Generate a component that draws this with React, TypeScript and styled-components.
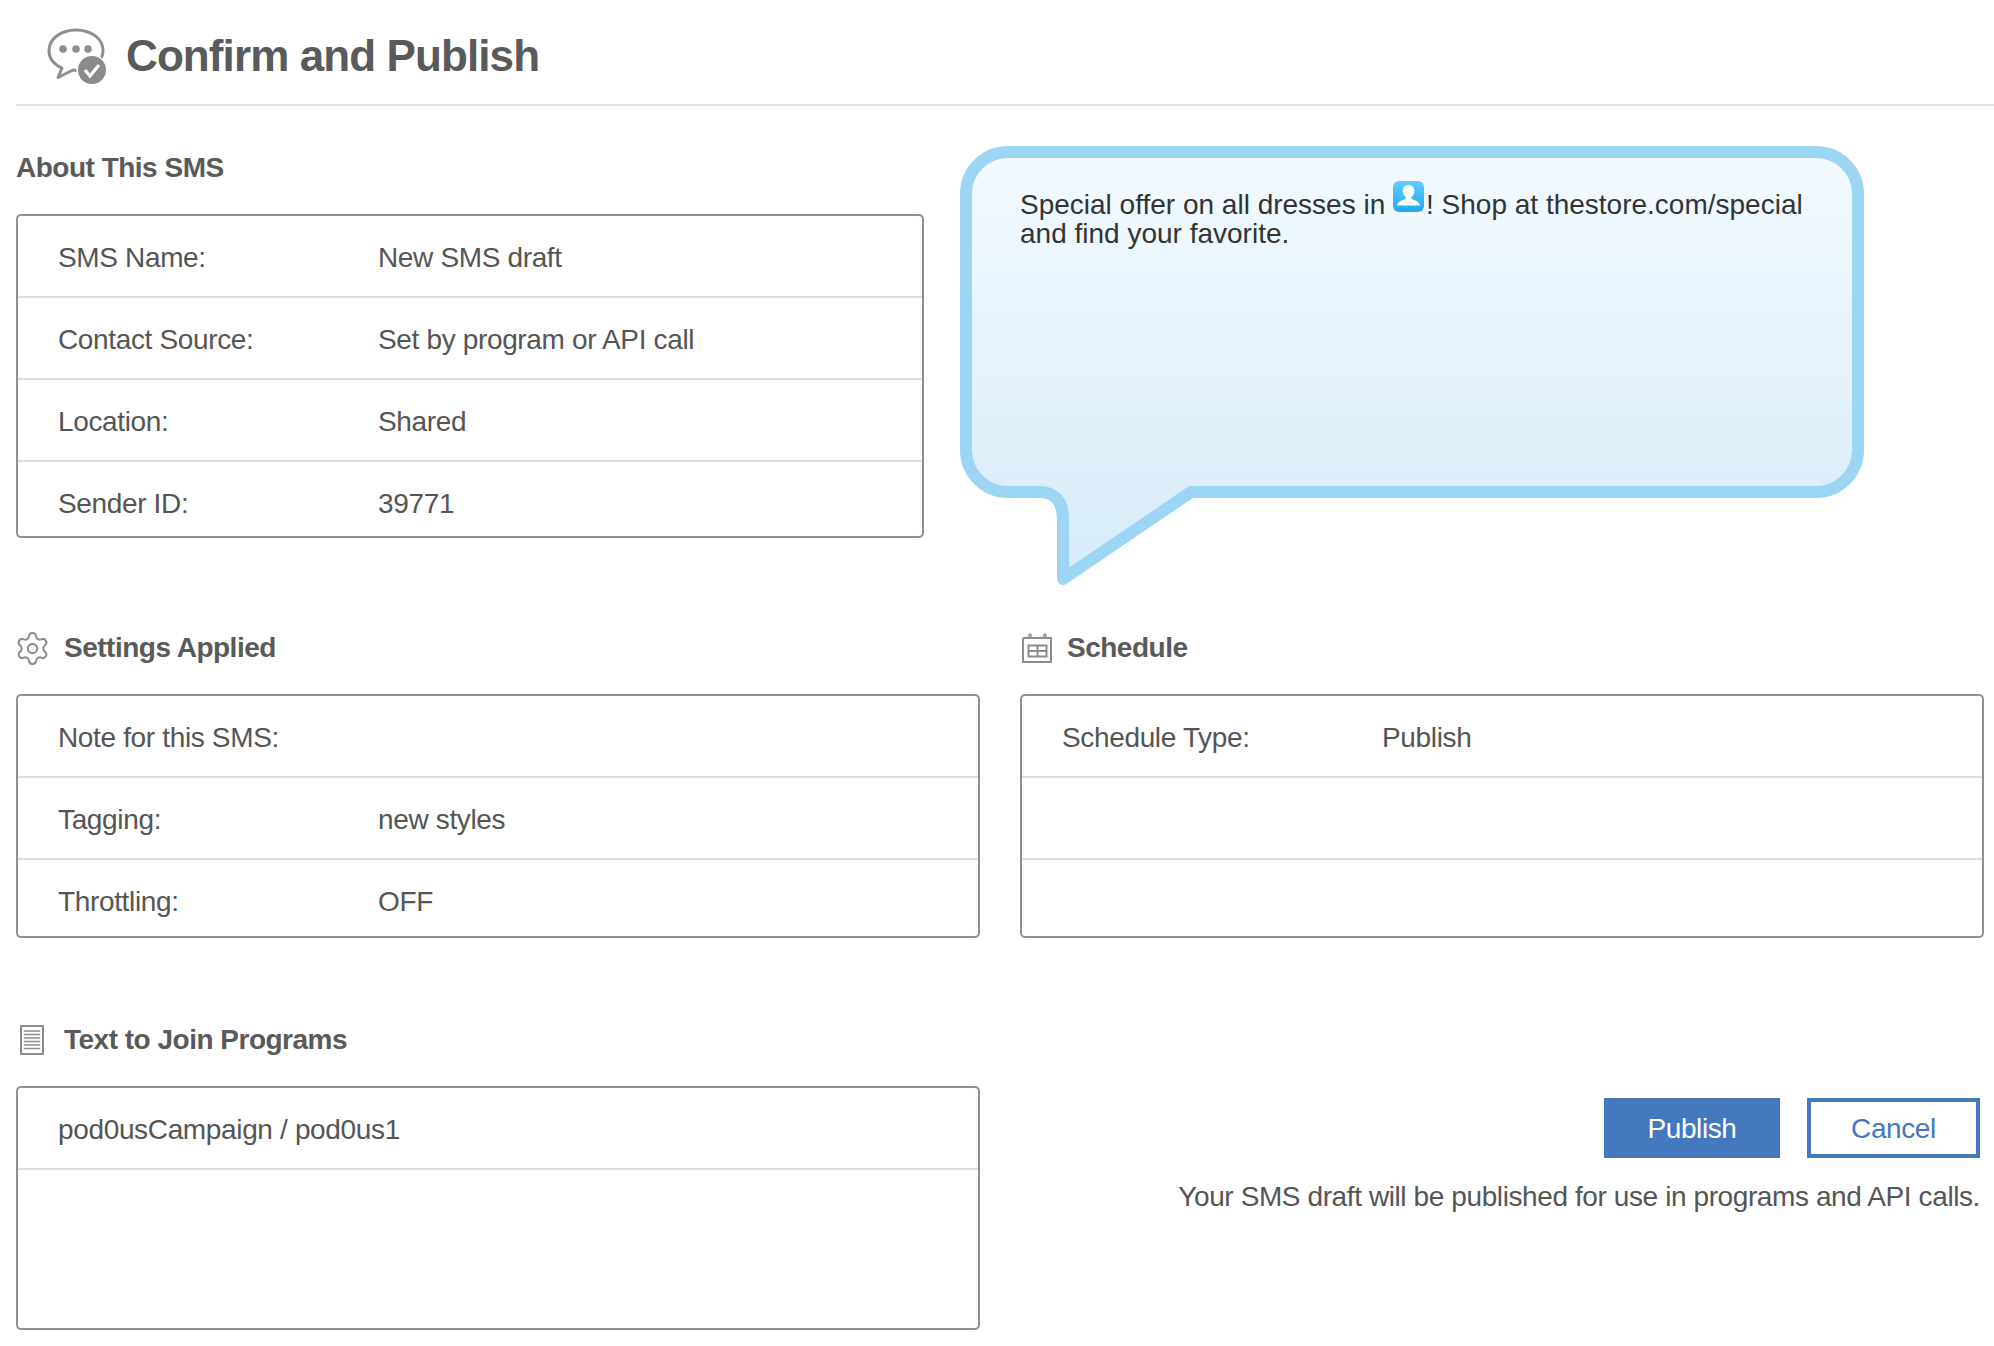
import React, { FC, ReactNode } from 'react'
import styled, { createGlobalStyle } from 'styled-components'
import { Settings } from 'lucide-react'

const GlobalStyle = createGlobalStyle`
  html, body {
    margin: 0;
    padding: 0;
    background: #fff;
  }
  body {
    font-family: "Liberation Sans", Arial, sans-serif;
    color: #555;
  }
  * {
    box-sizing: border-box;
  }
`

const Page = styled.div`
  width: 1994px;
  height: 1346px;
  overflow: hidden;
  padding: 0 10px 0 16px;
`

const Header = styled.header`
  height: 106px;
  margin-right: -10px;
  padding: 7px 0 0 30px;
  display: flex;
  align-items: center;
  gap: 20px;
  border-bottom: 2px solid #e1e1e1;
`

const Title = styled.h1`
  margin: 0;
  font-size: 44px;
  line-height: 50px;
  font-weight: 700;
  letter-spacing: -0.9px;
  color: #5a5a5a;
`

const TopRow = styled.div`
  display: flex;
  align-items: flex-start;
  gap: 36px;
  margin-top: 40px;
`

const TwoColumns = styled.div<{ $top: number }>`
  display: grid;
  grid-template-columns: 964px 964px;
  column-gap: 40px;
  margin-top: ${({ $top }) => $top}px;
`

const Section = styled.section<{ $width?: number; $top?: number }>`
  width: ${({ $width }) => ($width ? `${$width}px` : 'auto')};
  margin-top: ${({ $top }) => $top ?? 0}px;
`

const Heading = styled.h2<{ $gap?: number }>`
  margin: 0 0 25px;
  height: 42px;
  display: flex;
  align-items: center;
  gap: ${({ $gap }) => $gap ?? 16}px;
  font-size: 28px;
  font-weight: 700;
  letter-spacing: -0.5px;
  color: #5a5a5a;
`

const HeadingIcon = styled.span<{ $left?: number }>`
  display: flex;
  margin-left: ${({ $left }) => $left ?? 0}px;
  color: #8d8d8d;
`

const Card = styled.div<{ $height: number }>`
  height: ${({ $height }) => $height}px;
  display: flex;
  flex-direction: column;
  border: 2px solid #8f8f8f;
  border-radius: 5px;
`

const Row = styled.div`
  flex: none;
  height: 82px;
  padding: 24px 0 0 40px;
  display: flex;
  font-size: 28px;
  line-height: 36px;
  letter-spacing: -0.35px;
  white-space: nowrap;
  color: #555;
  border-bottom: 2px solid #dedede;

  &:last-child {
    flex: 1;
    border-bottom: none;
  }
`

const Label = styled.div<{ $wide?: boolean }>`
  width: ${({ $wide }) => ($wide ? 'auto' : '320px')};
`

const Value = styled.div``

const Bubble = styled.div`
  position: relative;
  width: 906px;
  height: 440px;
`

const BubbleShape = styled.svg`
  position: absolute;
  top: 0;
  left: 0;
`

const BubbleText = styled.p`
  position: relative;
  margin: 0;
  padding: 44px 40px 0 60px;
  font-size: 28px;
  line-height: 29px;
  letter-spacing: 0;
  color: #333;
`

const ContactIcon = styled.svg`
  display: inline-block;
  vertical-align: 4px;
  margin: -17px 2px -2px 0;
`

const Actions = styled.div`
  margin-top: 79px;
  padding-right: 4px;
  display: flex;
  flex-direction: column;
  align-items: flex-end;
`

const ButtonRow = styled.div`
  display: flex;
  gap: 27px;
`

const Button = styled.button<{ $outline?: boolean }>`
  height: 60px;
  width: ${({ $outline }) => ($outline ? 173 : 176)}px;
  padding: 2px 0 0;
  font-family: inherit;
  font-size: 28px;
  letter-spacing: -0.4px;
  border: 4px solid #4478bd;
  background: ${({ $outline }) => ($outline ? '#fff' : '#4478bd')};
  color: ${({ $outline }) => ($outline ? '#4478bd' : '#fff')};
`

const Note = styled.p`
  margin: 21px 0 0;
  font-size: 28px;
  line-height: 36px;
  letter-spacing: -0.4px;
  color: #555;
`

const ChatIcon: FC = () => (
  <svg width="60" height="58" viewBox="0 0 60 58">
    <path
      d="M30 3C14.5 3 3 12 3 23.5c0 7.5 5 14 13 17.5l-4 9.5 15-7.5c2 .3 3 .4 4 .4 15.5 0 26-9 26-20C57 12 45.500 3 30 3z"
      fill="none"
      stroke="#8f8f8f"
      strokeWidth="3"
      strokeLinejoin="round"
    />
    <circle cx="17" cy="22" r="3.800" fill="#8f8f8f" />
    <circle cx="30" cy="22" r="3.800" fill="#8f8f8f" />
    <circle cx="42" cy="22" r="3.800" fill="#8f8f8f" />
    <circle cx="46" cy="43" r="15.500" fill="#fff" />
    <circle cx="46" cy="43" r="14" fill="#8a8a8a" />
    <path d="M39 43l5 6 9-11" fill="none" stroke="#fff" strokeWidth="3.200" />
  </svg>
)

const CalendarIcon: FC = () => (
  <svg width="30" height="30" viewBox="0 0 30 30" fill="none" stroke="#8d8d8d" strokeWidth="2">
    <path d="M1 5h29M1 5v24h28V5" />
    <path d="M7 5V2a1 1 0 0 1 2 0v3M22 5V2a1 1 0 0 1 2 0v3" strokeWidth="1.500" />
    <path d="M6.500 12.500h18v11h-18zM6.500 18h18M15.500 12.500v11" />
  </svg>
)

const ListIcon: FC = () => (
  <svg width="24" height="30" viewBox="0 0 24 30" fill="none" stroke="#8d8d8d">
    <rect x="1" y="1" width="22" height="28" strokeWidth="2" />
    <path d="M4 6h16M4 9.500h16M4 13h16M4 16.500h16M4 20h16M4 23.500h16" strokeWidth="1.400" />
  </svg>
)

const InfoTable: FC<{ height: number; rows: [string, string?][] }> = ({ height, rows }) => (
  <Card $height={height}>
    {rows.map(([label, value], i) => (
      <Row key={i}>
        {label && <Label $wide={!value && label.length > 20}>{label}</Label>}
        {value && <Value>{value}</Value>}
      </Row>
    ))}
  </Card>
)

const TitledHeading: FC<{ icon?: ReactNode; left?: number; gap?: number; text: string }> = ({
  icon,
  left,
  gap,
  text,
}) => (
  <Heading $gap={gap}>
    {icon && <HeadingIcon $left={left}>{icon}</HeadingIcon>}
    {text}
  </Heading>
)

const App: FC = () => (
  <Page>
    <GlobalStyle />
    <Header>
      <ChatIcon />
      <Title>Confirm and Publish</Title>
    </Header>

    <TopRow>
      <Section $width={908} $top={1}>
        <TitledHeading text="About This SMS" />
        <InfoTable
          height={324}
          rows={[
            ['SMS Name:', 'New SMS draft'],
            ['Contact Source:', 'Set by program or API call'],
            ['Location:', 'Shared'],
            ['Sender ID:', '39771'],
          ]}
        />
      </Section>

      <Bubble>
        <BubbleShape width="906" height="440" viewBox="0 0 906 440">
          <defs>
            <linearGradient id="bubbleFill" x1="0" y1="0" x2="0" y2="1">
              <stop offset="0" stopColor="#f3faff" />
              <stop offset="1" stopColor="#d6ebf9" />
            </linearGradient>
          </defs>
          <path
            d="M48 6H856A42 42 0 0 1 898 48V304A42 42 0 0 1 856 346H231L103 433V374Q103 346 79 346H48A42 42 0 0 1 6 304V48A42 42 0 0 1 48 6Z"
            fill="url(#bubbleFill)"
            stroke="#9dd6f4"
            strokeWidth="12"
            strokeLinejoin="round"
          />
        </BubbleShape>
        <BubbleText>
          Special offer on all dresses in{' '}
          <ContactIcon width="31" height="31" viewBox="0 0 31 31">
            <defs>
              <linearGradient id="contactFill" x1="0" y1="0" x2="0" y2="1">
                <stop offset="0" stopColor="#62ccff" />
                <stop offset="1" stopColor="#1eaaf2" />
              </linearGradient>
            </defs>
            <rect width="31" height="31" rx="6" fill="url(#contactFill)" />
            <path
              d="M15.500 4c-3.800 0-5.800 2.600-5.800 6 0 2.600 1.100 4.700 2.800 6v2c-2.800 1-6 2-7.500 4-.6.800-1 1.700-1 2.500h23c0-.8-.4-1.700-1-2.500-1.500-2-4.700-3-7.500-4v-2c1.700-1.300 2.800-3.400 2.800-6 0-3.400-2-6-5.800-6z"
              fill="#fff"
            />
          </ContactIcon>
          ! Shop at thestore.com/special and find your favorite.
        </BubbleText>
      </Bubble>
    </TopRow>

    <TwoColumns $top={41}>
      <Section>
        <TitledHeading
          icon={<Settings size={37} strokeWidth={1.3} />}
          left={-2}
          gap={13}
          text="Settings Applied"
        />
        <InfoTable
          height={244}
          rows={[['Note for this SMS:'], ['Tagging:', 'new styles'], ['Throttling:', 'OFF']]}
        />
      </Section>
      <Section>
        <TitledHeading icon={<CalendarIcon />} left={2} gap={15} text="Schedule" />
        <InfoTable height={244} rows={[['Schedule Type:', 'Publish'], [''], ['']]} />
      </Section>
    </TwoColumns>

    <TwoColumns $top={81}>
      <Section>
        <TitledHeading icon={<ListIcon />} left={4} gap={20} text="Text to Join Programs" />
        <InfoTable height={244} rows={[['pod0usCampaign / pod0us1'], ['']]} />
      </Section>
      <Actions>
        <ButtonRow>
          <Button>Publish</Button>
          <Button $outline>Cancel</Button>
        </ButtonRow>
        <Note>Your SMS draft will be published for use in programs and API calls.</Note>
      </Actions>
    </TwoColumns>
  </Page>
)

export default App
